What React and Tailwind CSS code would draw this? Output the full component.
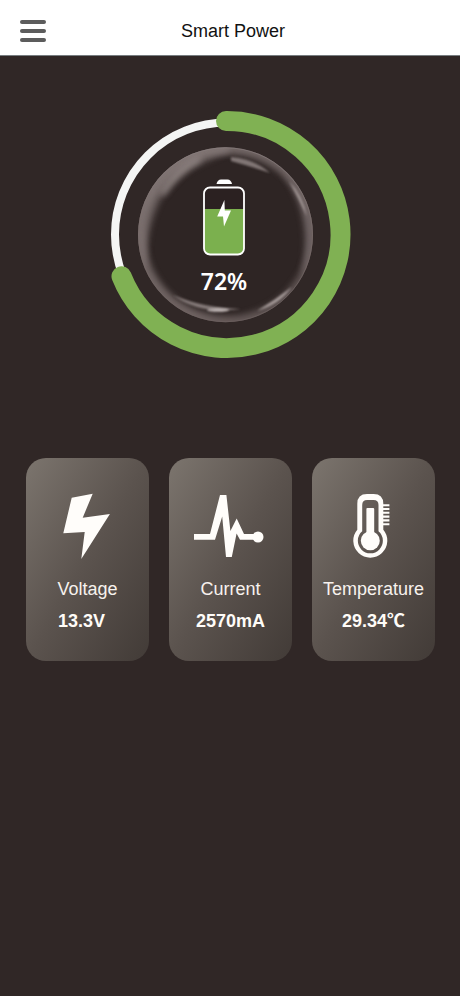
import React from 'react';

const BoltIcon = () => (
  <svg viewBox="0 0 73 66" className="w-[73px] h-[66px]" fill="#fffdfa" aria-hidden="true">
    <path d="M20.7 4.7 L41.7 0.7 L31.7 24.7 L58.9 21 L30.3 66 L33.7 39 L12.3 40.3 Z" />
  </svg>
);

const PulseIcon = () => (
  <svg viewBox="0 0 73 66" className="w-[73px] h-[66px]" fill="#fffdfa" aria-hidden="true">
    <path d="M0 41 H16 L26 2 H32.4 L36.4 38 L42.7 25.5 L50 41 H60 V46.8 H46 L42.6 40.5 L37.8 64 H32 L28.2 23.5 L21 46.8 H0 Z" />
    <circle cx="64" cy="44" r="5.5" />
  </svg>
);

const ThermometerIcon = () => (
  <svg viewBox="0 0 73 66" className="w-[73px] h-[66px]" fill="#fffdfa" aria-hidden="true">
    <path
      fillRule="evenodd"
      d="M20.3 10.7 Q20.3 0.9 30 0.9 H36.6 Q46.3 0.9 46.3 10.7 V36.7 A17 17 0 1 1 20.3 36.7 Z M25.2 12 V38.3 A12.5 12.5 0 1 0 41.5 38.3 V12 Q41.5 7 36.5 7 H30.2 Q25.2 7 25.2 12 Z"
    />
    <rect x="29.4" y="15" width="7.8" height="28" rx="1" />
    <circle cx="33.3" cy="47.7" r="9.5" />
    <path d="M46 12.2 H52.4 M46 16 H52.4 M46 19.8 H52.4 M46 23.6 H52.4 M46 27.4 H52.4 M46 31.2 H52.4" stroke="#fffdfa" strokeWidth="2.1" />
  </svg>
);

const BatteryIcon = () => (
  <svg viewBox="0 0 42 78" className="w-[42px] h-[78px]" aria-hidden="true">
    <path d="M13.5 5 Q14.5 0.5 18 0.5 H24.5 Q28 0.5 29 5 Z" fill="#ffffff" />
    <rect x="1" y="8.5" width="40" height="67" rx="6" fill="#2b2121" />
    <path d="M1 30 H41 V69.5 Q41 75.5 35 75.5 H7 Q1 75.5 1 69.5 Z" fill="#7bb04e" />
    <rect x="1" y="8.5" width="40" height="67" rx="6" fill="none" stroke="#ffffff" strokeWidth="1.8" />
    <path d="M21.4 21 L14.2 37.4 H20 L21 47.4 L28 31.6 H21.8 Z" fill="#ffffff" />
  </svg>
);

const Gauge = ({ percent }) => {
  return (
    <div className="relative">
      <svg viewBox="0 0 254 248" className="w-[254px] h-[248px]" aria-hidden="true">
        <defs>
          <linearGradient id="shade" x1="0.1" y1="0.1" x2="0.9" y2="0.9">
            <stop offset="0" stopColor="#988c8a" />
            <stop offset="0.35" stopColor="#857978" />
            <stop offset="0.65" stopColor="#857877" />
            <stop offset="1" stopColor="#625756" />
          </linearGradient>
          <linearGradient id="rim" x1="0" y1="0" x2="0" y2="1">
            <stop offset="0" stopColor="#8a8080" />
            <stop offset="0.5" stopColor="#7a6d6b" />
            <stop offset="1" stopColor="#6c605f" />
          </linearGradient>
          <filter id="soft" x="-30%" y="-30%" width="160%" height="160%">
            <feGaussianBlur stdDeviation="3.4" />
          </filter>
          <filter id="glint" x="-30%" y="-80%" width="160%" height="260%">
            <feGaussianBlur stdDeviation="1.3" />
          </filter>
          <clipPath id="orbClip">
            <circle cx="122.5" cy="123.7" r="87.5" />
          </clipPath>
        </defs>

        {/* Track and progress */}
        <circle cx="124" cy="123.5" r="112" fill="none" stroke="#f4f5f4" strokeWidth="8" />
        <path
          d="M123 10 H124 A113.5 113.5 0 1 1 18.5 165.3"
          fill="none"
          stroke="#80b153"
          strokeWidth="20"
          strokeLinecap="round"
        />

        {/* Glass orb */}
        <circle cx="122.5" cy="123.7" r="87.5" fill="#2e2524" />
        <g clipPath="url(#orbClip)">
          <path
            fillRule="evenodd"
            d="M22 124 A100 100 0 1 1 222 124 A100 100 0 1 1 22 124 Z M42 124 A82 81 0 1 0 206 124 A82 81 0 1 0 42 124 Z"
            fill="url(#shade)"
            opacity="0.75"
            filter="url(#soft)"
          />
          {/* Side reflections */}
          <path d="M126 34 Q92 34 66 56 Q38 82 36 126 Q38 148 44 158 Q42 122 56 92 Q74 58 126 42 Z" fill="#8d8180" opacity="0.55" filter="url(#soft)" />
          <path d="M98 46 Q72 56 58 82 Q58 86 62 84 Q76 62 98 50 Z" fill="#aba09e" opacity="0.7" filter="url(#soft)" />
          <path d="M178 60 Q214 92 209 136 Q207 154 198 164 Q204 140 201 116 Q198 88 178 60 Z" fill="#95898a" opacity="0.5" filter="url(#soft)" />
          <path d="M186 70 Q200 84 204 106 Q196 88 186 70 Z" fill="#b8adab" opacity="0.7" filter="url(#glint)" />
          {/* Top and bottom glints */}
          <path d="M128 46 Q152 48 167 62 Q150 56 128 50 Z" fill="#8f8483" opacity="0.85" filter="url(#glint)" />
          <path d="M70 184 Q96 204 138 198 Q100 197 70 184 Z" fill="#8f8483" opacity="0.9" filter="url(#glint)" />
          <ellipse cx="115" cy="199" rx="11" ry="1.8" fill="#cfc6c5" opacity="0.85" filter="url(#glint)" />
          <path d="M154 200 Q176 194 189 176 Q172 189 154 200 Z" fill="#b0a5a4" opacity="0.9" filter="url(#glint)" />
        </g>
        <circle cx="122.5" cy="123.7" r="87" fill="none" stroke="url(#rim)" strokeWidth="0.8" opacity="0.8" />
      </svg>

      {/* Reading over the orb */}
      <div className="absolute inset-0 flex flex-col items-center pt-[68px] pr-3">
        <BatteryIcon />
        <p className="mt-2 font-['Noto_Sans',sans-serif] font-semibold text-[23px] leading-8 text-white">
          {percent}%
        </p>
      </div>
    </div>
  );
};

const readings = [
  { title: 'Voltage', value: '13.3V', icon: BoltIcon, valueClass: 'pr-3' },
  { title: 'Current', value: '2570mA', icon: PulseIcon, valueClass: '' },
  { title: 'Temperature', value: '29.34℃', icon: ThermometerIcon, valueClass: '' }
];

const App = () => {
  return (
    <div className="min-h-screen bg-[#302726] font-['Liberation_Sans','Noto_Sans_CJK_SC',sans-serif]">
      {/* Header */}
      <header className="h-14 flex items-center pl-5 pr-10 pt-1.5 bg-white border-b border-[#777d80]">
        <button type="button" aria-label="Menu" className="w-[26px] flex flex-col gap-[5px]">
          <span className="h-1 w-full rounded-full bg-[#5c5c5c]" />
          <span className="h-1 w-full rounded-full bg-[#5c5c5c]" />
          <span className="h-1 w-full rounded-full bg-[#5c5c5c]" />
        </button>
        <h1 className="flex-1 text-center text-lg text-[#111111]">Smart Power</h1>
      </header>

      <main>
        <section className="flex justify-center pt-[55px]">
          <Gauge percent={72} />
        </section>

        {/* Readings */}
        <section className="grid grid-cols-3 gap-5 pl-[26px] pr-[25px] mt-[99px]">
          {readings.map((reading) => (
            <div
              key={reading.title}
              className="flex flex-col items-center pt-[35px] pb-[26px] rounded-[20px] bg-linear-to-br from-[#7c756e] via-[#5b534e] to-[#423b37]"
            >
              <reading.icon />
              <h2 className="mt-4 text-lg text-[#f7f2ee]">{reading.title}</h2>
              <p className={`mt-1 text-lg font-bold text-[#fffcf8] ${reading.valueClass}`}>
                {reading.value}
              </p>
            </div>
          ))}
        </section>
      </main>
    </div>
  );
};

export default App;
